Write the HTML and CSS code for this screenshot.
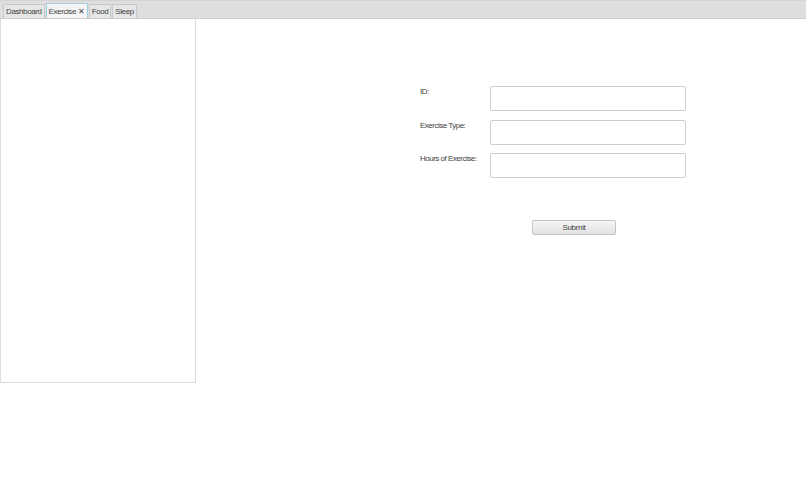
FILE: index.html
```html
<!DOCTYPE html>
<html lang="en">
<head>
	<meta charset="UTF-8">
	<title>Exercise</title>
	<link rel="stylesheet" href="styles.css">
</head>
<body>
<div class="tabbar">
	<span class="tab">Dashboard</span>
	<span class="tab selected">Exercise <span class="close">&#x2715;</span></span>
	<span class="tab">Food</span>
	<span class="tab">Sleep</span>
</div>
<div class="main">
	<div class="side"></div>
	<div class="content">
		<div class="form">
			<label>ID:</label>
			<input type="text" id="id">
			<label>Exercise Type:</label>
			<input type="text" id="type">
			<label>Hours of Exercise:</label>
			<input type="text" id="hours">
		</div>
		<button class="submit">Submit</button>
	</div>
</div>
</body>
</html>
```
FILE: styles.css
```css
html { height: 100%; }

body {
	margin: 0;
	font-size: 8px;
	font-family: "Liberation Sans", Arial, sans-serif;
	letter-spacing: -0.4px;
	color: #333;
	background: #fff;
}

.tabbar {
	display: flex;
	align-items: flex-end;
	gap: 1px;
	height: 19px;
	padding-left: 3px;
	background: #dedede;
	border-top: 1px solid #d4d4d4;
	border-bottom: 1px solid #cfcfcf;
	box-sizing: border-box;
}

.tab {
	display: flex;
	align-items: center;
	height: 13px;
	padding: 0 2px;
	background: #e6e6e6;
	border: 1px solid #c9c9c9;
	border-bottom: none;
	color: #444;
}

.tab.selected {
	background: #f4f4f4;
	border-color: #9fd0e0;
	height: 14px;
}

.close {
	margin-left: 2px;
	font-size: 8px;
}

.main {
	display: flex;
}

.side {
	width: 196px;
	height: 364px;
	border: 1px solid #dcdcdc;
	border-top: none;
	box-sizing: border-box;
}

.content {
	margin-left: 224px;
	padding-top: 67px;
}

.form {
	display: grid;
	grid-template-columns: 70px 196px;
	row-gap: 8.5px;
}

label {
	padding-top: 1px;
	color: #444;
	letter-spacing: -0.5px;
}

input {
	height: 25px;
	margin: 0;
	padding: 0 4px;
	border: 1px solid #cfcfcf;
	border-radius: 2px;
	box-sizing: border-box;
	background: #fff;
}

.submit {
	display: block;
	margin: 42px 0 0 112px;
	width: 84px;
	height: 15px;
	padding: 0;
	font-size: 8px;
	font-family: "Liberation Sans", Arial, sans-serif;
	letter-spacing: -0.3px;
	color: #444;
	background: linear-gradient(#f6f6f6, #e2e2e2);
	border: 1px solid #c4c4c4;
	border-radius: 2px;
}
```
